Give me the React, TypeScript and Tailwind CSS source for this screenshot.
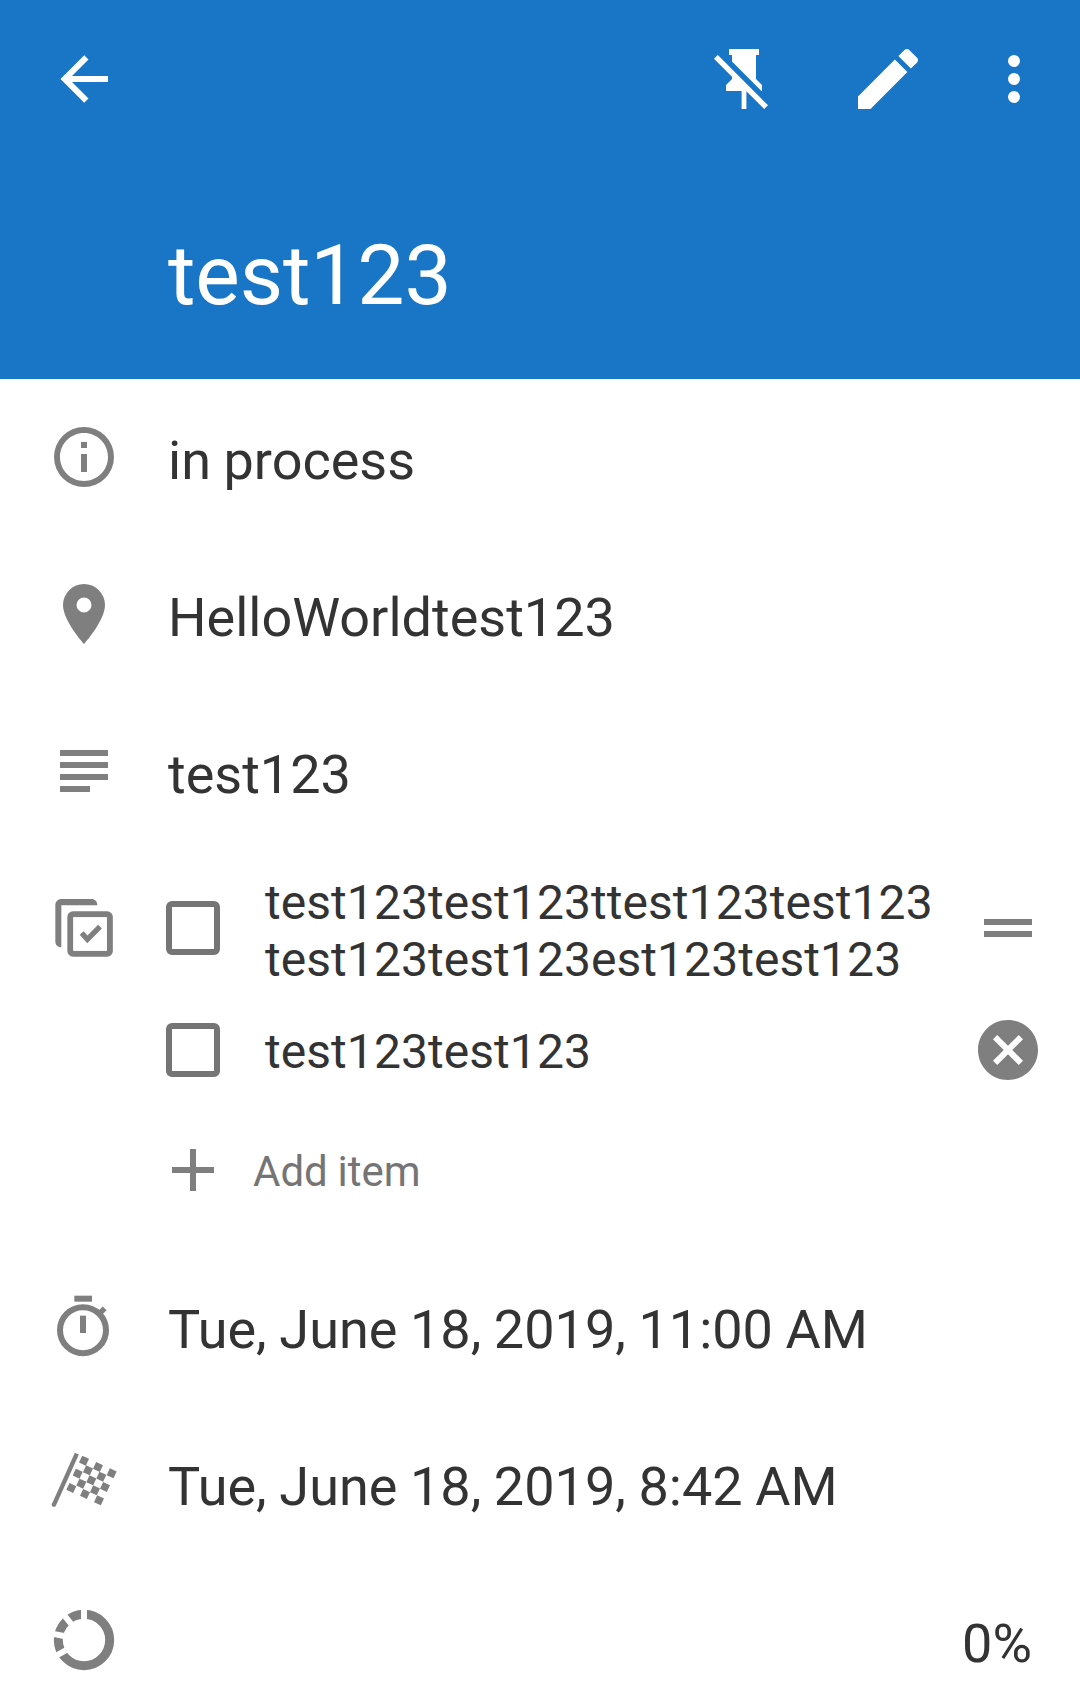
import type { ReactNode } from 'react';

const GRAY = '#7f7f7f';

function Icon({ d, className = 'size-[72px]' }: { d: string; className?: string }) {
  return (
    <svg viewBox="0 0 24 24" fill="currentColor" className={`shrink-0 ${className}`}>
      <path d={d} />
    </svg>
  );
}

function ChecklistIcon() {
  return (
    <svg viewBox="54 486 216 216" className="size-[72px] shrink-0" fill="none" stroke={GRAY}>
      <path
        d="M94 652C83 652 76 645 76 634V526C76 515 84 507 95 507H184C195 507 202 514 202 526H94Z"
        fill={GRAY}
        stroke="none"
      />
      <rect x="121" y="553" width="118.500" height="118" rx="8" strokeWidth="18" />
      <rect x="130" y="562" width="100" height="100" fill="white" stroke="none" />
      <path d="M155 609L172 628L210 590" strokeWidth="16" />
    </svg>
  );
}

function TimerIcon() {
  return (
    <svg viewBox="54 60 216 216" className="size-[72px] shrink-0" fill={GRAY}>
      <circle cx="159" cy="180.500" r="69" fill="none" stroke={GRAY} strokeWidth="18" />
      <rect x="133" y="77" width="53" height="18" />
      <rect x="150" y="137" width="18" height="52" />
      <path d="M204 135L224 115" stroke={GRAY} strokeWidth="16" />
    </svg>
  );
}

const FLAG_CELLS = [
  [162, 572], [204, 591], [245, 610],
  [174, 601], [214, 620],
  [143, 611], [184, 631], [225, 651],
  [154, 641], [195, 661],
  [124, 654], [165, 672], [207, 691],
];

function FlagIcon() {
  return (
    <svg viewBox="54 531 216 216" className="size-[72px] shrink-0 overflow-visible" fill={GRAY}>
      <path d="M140.500 551L72 704" stroke={GRAY} strokeWidth="13" />
      <circle cx="71.500" cy="704" r="6.500" />
      {FLAG_CELLS.map(([x, y]) => (
        <rect
          key={`${x}-${y}`}
          x={x - 11.25}
          y={y - 11.25}
          width="22.500"
          height="22.500"
          transform={`rotate(25 ${x} ${y})`}
        />
      ))}
    </svg>
  );
}

function ProgressIcon() {
  return (
    <svg viewBox="-108 -108 216 216" className="size-[72px] shrink-0">
      <circle r="77" fill="none" stroke={GRAY} strokeWidth="27" />
      <g stroke="white" strokeWidth="18">
        <path d="M0 -40V-96" />
        <path d="M-30 -37.500L-60 -75" />
        <path d="M-45 -9L-96 -19" />
        <path d="M-42 24L-86 48.500" />
      </g>
    </svg>
  );
}

function Row({ icon, children, end = false }: { icon: ReactNode; children: ReactNode; end?: boolean }) {
  return (
    <div className="flex h-[157px] shrink-0 items-start px-12 pt-[42px] text-[#7f7f7f]">
      {icon}
      <p
        className={`mt-2 ml-12 flex-1 text-[54px] leading-[64px] [word-spacing:-0.8px] whitespace-nowrap text-[#333] ${end ? 'text-right' : ''}`}
      >
        {children}
      </p>
    </div>
  );
}

function Checkbox() {
  return <span className="block size-[54px] shrink-0 rounded-[6px] border-[6px] border-[#757575]" />;
}

export default function App() {
  return (
    <div className="flex h-[1699px] w-[1080px] flex-col overflow-hidden bg-white font-['Roboto',sans-serif]">
      <header className="h-[379px] shrink-0 bg-[#1976c7] text-white">
        <div className="flex items-start pt-[43px] pl-12">
          <Icon d="M20,11V13H8L13.5,18.5L12.08,19.92L4.16,12L12.08,4.08L13.5,5.5L8,11H20Z" />
          <Icon
            className="ml-[588px] size-[72px]"
            d="M2,5.27L3.28,4L20,20.72L18.73,22L12.8,16.07V22H11.2V16H6V14L8,12V11.27L2,5.27M16,12L18,14V16H17.82L8,6.18V4H7V2H17V4H16V12Z"
          />
          <Icon
            className="-mt-1 ml-[68px] size-20"
            d="M20.71,7.04C21.1,6.65 21.1,6 20.71,5.63L18.37,3.29C18,2.9 17.35,2.9 16.96,3.29L15.12,5.12L18.87,8.87M3,17.25V21H6.75L17.81,9.93L14.06,6.18L3,17.25Z"
          />
          <Icon
            className="ml-[50px] size-[72px]"
            d="M12,16A2,2 0 1,1 12,20A2,2 0 0,1 12,16M12,10A2,2 0 1,1 12,14A2,2 0 0,1 12,10M12,4A2,2 0 1,1 12,8A2,2 0 0,1 12,4Z"
          />
        </div>
        <h1 className="mt-[103px] ml-42 text-[84px] leading-[108px] font-normal tracking-[-0.15px]">test123</h1>
      </header>

      <Row icon={<Icon d="M11,9H13V7H11M12,20C7.59,20 4,16.41 4,12C4,7.59 7.59,4 12,4C16.41,4 20,7.59 20,12C20,16.41 16.41,20 12,20M12,2A10,10 0 0,0 2,12A10,10 0 0,0 12,22A10,10 0 0,0 22,12A10,10 0 0,0 12,2M11,17H13V11H11V17Z" />}>
        in process
      </Row>
      <Row icon={<Icon d="M12,11.5A2.5,2.5 0 0,1 9.5,9A2.5,2.5 0 0,1 12,6.5A2.5,2.5 0 0,1 14.5,9A2.5,2.5 0 0,1 12,11.5M12,2A7,7 0 0,0 5,9C5,14.25 12,22 12,22C12,22 19,14.25 19,9A7,7 0 0,0 12,2Z" />}>
        HelloWorldtest123
      </Row>
      <Row icon={<Icon d="M4,5H20V7H4V5M4,9H20V11H4V9M4,13H20V15H4V13M4,17H14V19H4V17Z" />}>test123</Row>

      <section className="flex h-[398px] shrink-0 items-start px-9 pt-[17px] text-[48px] leading-[57px] text-[#333]">
        <div className="mt-[25px] ml-3">
          <ChecklistIcon />
        </div>
        <div className="ml-[46px] flex-1">
          <div className="flex h-[122px] items-center">
            <Checkbox />
            <p className="mt-[5px] ml-[45px] flex-1 tracking-[0.06px]">
              test123test123ttest123test123
              <br />
              test123test123est123test123
            </p>
            <Icon className="size-[72px] text-[#7f7f7f]" d="M4,9H20V11H4V9M4,13H20V15H4V13Z" />
          </div>
          <div className="flex h-[122px] items-center">
            <Checkbox />
            <p className="mt-0.5 ml-[45px] flex-1 tracking-[0.06px]">test123test123</p>
            <Icon
              className="size-[72px] text-[#7f7f7f]"
              d="M12,2C17.53,2 22,6.47 22,12C22,17.53 17.53,22 12,22C6.47,22 2,17.53 2,12C2,6.47 6.47,2 12,2M15.59,7L12,10.59L8.41,7L7,8.41L10.59,12L7,15.59L8.41,17L12,13.41L15.59,17L17,15.59L13.41,12L17,8.41L15.59,7Z"
            />
          </div>
          <div className="flex h-[118px] items-center text-[#757575]">
            <Icon className="-ml-[9px] size-[72px] text-[#7f7f7f]" d="M19,13H13V19H11V13H5V11H11V5H13V11H19V13Z" />
            <p className="mt-[3px] ml-[24px] text-[42px] leading-[50px] [word-spacing:-0.6px]">Add item</p>
          </div>
        </div>
      </section>

      <Row icon={<TimerIcon />}>Tue, June 18, 2019, 11:00 AM</Row>
      <Row icon={<FlagIcon />}>Tue, June 18, 2019, 8:42 AM</Row>
      <Row icon={<ProgressIcon />} end>
        0%
      </Row>
    </div>
  );
}
